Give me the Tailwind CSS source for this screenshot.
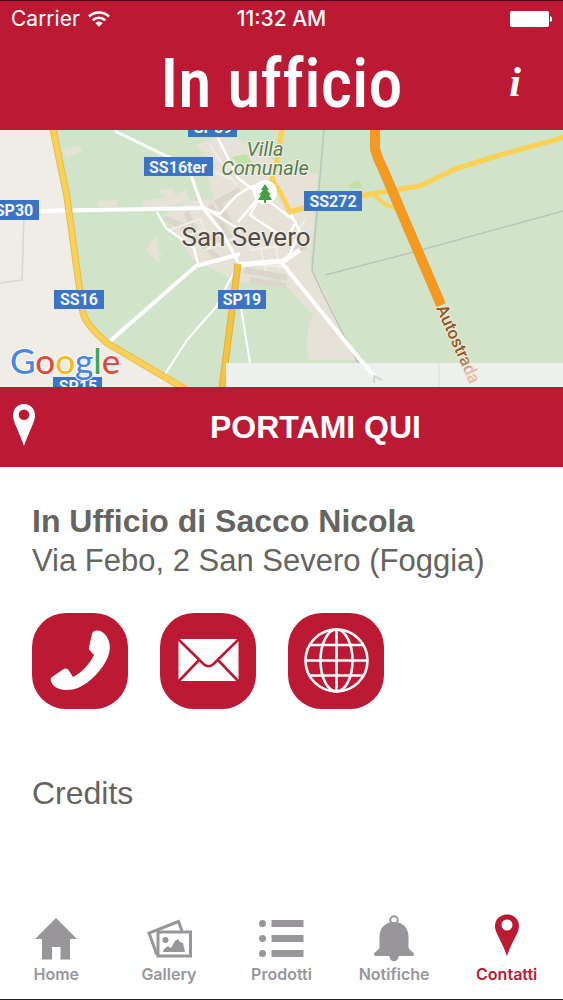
<!DOCTYPE html>
<html lang="it">
<head>
  <meta charset="UTF-8" />
  <meta name="viewport" content="width=device-width, initial-scale=1.0"/>
  <title>In Ufficio - Contatti</title>
  <script src="https://cdn.jsdelivr.net/npm/@tailwindcss/browser@4"></script>
</head>
<body class="min-h-screen flex flex-col bg-white border-b border-[#222] text-[#65645e] font-['Liberation_Sans',Arial,sans-serif]">

  <!-- Header -->
  <header class="bg-[#bb1934] border-t border-[#4a0610] text-white">
    <div class="grid grid-cols-3 items-center h-9 px-[11px] text-[21px] leading-6 font-['Inter',sans-serif]">
      <div class="flex items-center gap-2">
        <span>Carrier</span>
        <svg class="w-[22px] h-4" viewBox="0 0 22 16" fill="none" stroke="#fff" stroke-width="2.6">
          <path d="M1 5.6C6.5 .2 15.500 .2 21 5.600"/>
          <path d="M4.700 9.300C8.300 5.900 13.700 5.900 17.300 9.300"/>
          <path d="M11 15.800 7.300 12C9.400 10 12.600 10 14.700 12Z" fill="#fff" stroke="none"/>
        </svg>
      </div>
      <span class="text-center font-medium whitespace-nowrap">11:32 AM</span>
      <svg class="justify-self-end w-[43px] h-[18px]" viewBox="0 0 43 18" fill="#fff">
        <rect x="1" y="1" width="39" height="16" rx="2"/>
        <path d="M41 6v6c3-1 3-5 0-6z"/>
      </svg>
    </div>
    <div class="grid grid-cols-[64px_1fr_64px] items-center h-[93px] px-4">
      <h1 class="col-start-2 text-center text-[68px] leading-[88px] font-medium whitespace-nowrap font-['Roboto_Condensed','Liberation_Sans',sans-serif] [font-variant-ligatures:none]">In ufficio</h1>
      <button type="button" aria-label="Informazioni" class="pb-1 text-[42px] leading-none font-bold italic font-['Liberation_Serif',serif]">i</button>
    </div>
  </header>

  <!-- Map -->
  <svg class="block w-full h-auto" viewBox="0 130 563 257" role="img" aria-label="Mappa di San Severo">
    <defs>
      <linearGradient id="fade" x1="0" x2="1">
        <stop offset="0.65" stop-color="#8a5a2b"/>
        <stop offset="0.85" stop-color="#dcbcae"/>
      </linearGradient>
    </defs>
    <rect y="130" width="563" height="257" fill="#d1e4c9"/>
    <path d="M0 130H53L67 197L80 292L83 315L107 343L183 388H0Z" fill="#f0ece6"/>
    <!-- built-up area -->
    <g fill="#e6e2d8">
      <path d="M196 145l22-8 22 2 18 14 30 14 30 8-4 50-4 38 14 27 33 70h-48q-6-24 4-45l-34-37-35 5-25-11-26-12-30-45 28-14 23-2-7-25 9-8z"/>
      <path d="M62 150l18-4 2 6-16 5zM98 201l19-1v7H98zM143 201l20-3 8 3v6h-28zM158 190l14-2 4 8 10-7 4 13-18 3zM146 250l5-8 5-6 3 16 5 2-6 2 2 8z"/>
    </g>
    <path d="M232 157l14-3 6 8-14 3zM348 185l10-5 6 7-12 2z" fill="#c5dfa8"/>
    <g fill="none" stroke="#dad6cc" stroke-width="6">
      <path d="M164 218l32 14 30 10M186 212l14 30 20 18M210 205l24 40M245 270l42 8M250 280l36 6M290 250l16-4M240 190l-22 12 12 22"/>
    </g>
    <g fill="none" stroke="#f1eee7" stroke-width="2">
      <path d="M170 230l30-11 12 30M180 240l22-10M205 250l30-12M250 250l35-5M295 235l10-15M240 262l50 6M200 165l30 14M210 145l26 40M260 245l6 26M275 240l4 30"/>
    </g>
    <!-- boundaries -->
    <g fill="none" stroke="#b9c5b9" stroke-width="1.500">
      <path d="M324 130L312 270L322 292L358 363M325 275L410 253L563 211"/>
      <path d="M24 215L22 280L0 283" stroke="#d9d7cf"/>
    </g>
    <!-- minor roads -->
    <g fill="none" stroke="#fff" stroke-linejoin="round">
      <path d="M38 211L205 208" stroke-width="4"/>
      <path d="M110 341L196 266L240 254" stroke-width="4"/>
      <path d="M115 131L160 153L187 165L203 208L222 232L238 262" stroke-width="3"/>
      <path d="M157 212L166 228L194 248L198 264M203 208L220 214L236 196L250 187L262 184M205 208L240 230M238 222L260 196L250 215L280 235M262 196L296 222L286 240M290 212L300 232L286 262M218 138L238 178L256 192" stroke-width="2.500"/>
      <path d="M238 265L270 262L283 261L300 250" stroke-width="5"/>
      <path d="M281 262L375 378" stroke-width="4"/>
      <path d="M236 268L216 307L187 340L160 382M241 308L250 363" stroke-width="2"/>
    </g>
    <!-- main roads -->
    <g fill="none" stroke-linejoin="round">
      <g stroke="#e2bd55" stroke-width="7">
        <path d="M53 129L67 197L80 292L83 313Q86 325 107 343L185 389"/>
        <path d="M238 264L222 388" stroke="#dfb23e"/>
      </g>
      <g stroke="#fad055" stroke-width="5">
        <path d="M53 129L67 197L80 292L83 313Q86 325 107 343L185 389"/>
        <path d="M238 264L222 388" stroke="#f3c343"/>
        <path d="M282 129L277 160L272 180L280 192L290 212L310 206L365 195L420 186L455 169L500 155L565 137"/>
        <path d="M374 195L386 205L400 209" stroke-width="4"/>
      </g>
      <path d="M375 129V149Q378 160 383 169L441 305" stroke="#df9a38" stroke-width="10"/>
      <path d="M375 129V149Q378 160 383 169L441 305" stroke="#f7991c" stroke-width="8"/>
    </g>
    <rect x="226" y="363" width="337" height="24" fill="#f1f3f4" fill-opacity=".85"/>
    <path d="M439 363v24" stroke="#d5dfcd"/>
    <path d="M361 360L374 376" fill="none" stroke="#fff" stroke-width="4"/>
    <path d="M374 383v-7l8 4" fill="none" stroke="#d4d4d2" stroke-width="2"/>
    <text transform="translate(436 308) rotate(66)" font-family="Roboto" font-size="17" font-weight="500" fill="url(#fade)" stroke="#f6ecd9" stroke-width="2" paint-order="stroke">Autostrada</text>
    <!-- park marker -->
    <circle cx="265" cy="192" r="12" fill="#fff"/>
    <path d="M265 184l4 6h-2l4 5h-2l3 5h-6v3h-2v-3h-6l3-5h-2l4-5h-2z" fill="#46a043"/>
    <g font-family="Roboto" font-style="italic" font-size="20" fill="#587a50" stroke="#eef3e8" stroke-width="2" paint-order="stroke" text-anchor="middle">
      <text x="265" y="156">Villa</text>
      <text x="265" y="175">Comunale</text>
    </g>
    <text x="246" y="246" font-family="Roboto" font-size="26" fill="#504b48" stroke="#f4f1ea" stroke-width="2" paint-order="stroke" text-anchor="middle">San Severo</text>
    <!-- road signs -->
    <g fill="#3b74c5">
      <rect x="144" y="157" width="69" height="19"/>
      <rect x="-8" y="200" width="47" height="20"/>
      <rect x="54" y="290" width="50" height="19"/>
      <rect x="218" y="290" width="48" height="19"/>
      <rect x="304" y="191" width="58" height="20"/>
      <rect x="53" y="377" width="49" height="19"/>
      <rect x="188" y="117" width="49" height="20"/>
    </g>
    <g font-family="Roboto" font-size="16" font-weight="700" fill="#f0f6ff" text-anchor="middle">
      <text x="178" y="173">SS16ter</text>
      <text x="14" y="216">SP30</text>
      <text x="79" y="305">SS16</text>
      <text x="242" y="305">SP19</text>
      <text x="333" y="207">SS272</text>
      <text x="78" y="392">SP15</text>
      <text x="213" y="133">SP89</text>
    </g>
    <text x="10" y="374" font-family="Lato" font-size="35" font-weight="500" stroke="#fff" stroke-width="2" paint-order="stroke"><tspan fill="#4a86e4">G</tspan><tspan fill="#e0493c">o</tspan><tspan fill="#f5ba1b">o</tspan><tspan fill="#4a86e4">g</tspan><tspan fill="#3aa757">l</tspan><tspan fill="#e0493c">e</tspan></text>
  </svg>

  <!-- Directions -->
  <button type="button" class="grid grid-cols-[68px_1fr] items-center w-full h-20 bg-[#bb1934] text-white text-[32px] leading-10 font-bold">
    <svg class="ml-3 w-6 h-[46px]" viewBox="0 0 24 46" fill="#fff" fill-rule="evenodd">
      <path d="M12 0C5.500 0 1 5 1 11.500C1 18 6 25 12 42C18 25 23 18 23 11.500C23 5 18.500 0 12 0ZM12 5.500a5.300 5.300 0 1 1 0 10.600a5.300 5.300 0 1 1 0-10.600Z"/>
    </svg>
    <span>PORTAMI QUI</span>
  </button>

  <!-- Contact details -->
  <main class="flex-1 px-8 pt-[34px]">
    <h2 class="text-[32px] leading-10 font-bold">In Ufficio di Sacco Nicola</h2>
    <p class="text-[31px] leading-10">Via Febo, 2 San Severo (Foggia)</p>
    <div class="flex gap-8 mt-8">
      <a href="tel:" aria-label="Telefono" class="size-24 rounded-[34px] bg-[#bb1934]">
        <svg class="size-24" viewBox="0 0 96 96" fill="#fff">
          <path d="M62.500 18C67 16.500 71 19 73.500 22C79 29 79 38 75 46C69 58 59 69 46 75C38 78 27 77.500 22 73C19 70 17.500 66 20 64L31 56.500C33 55 35 55 36.500 57L41 64C49 60 58 51 62 42L57 36.500C56.500 35.500 57 34 57.500 32L60 21C60.500 19.500 61 18.500 62.500 18Z"/>
        </svg>
      </a>
      <a href="mailto:" aria-label="Email" class="size-24 rounded-[34px] bg-[#bb1934]">
        <svg class="size-24" viewBox="0 0 96 96">
          <rect x="18.500" y="26" width="60" height="42" fill="#fff"/>
          <path d="M18 26L44 51.500Q48.500 55 53 51.500L79 26M18 69L39 47M79 69L58 47" fill="none" stroke="#bb1934" stroke-width="2.600"/>
        </svg>
      </a>
      <a href="#" aria-label="Sito web" class="size-24 rounded-[34px] bg-[#bb1934]">
        <svg class="size-24" viewBox="0 0 96 96" fill="none" stroke="#fff" stroke-width="2.600">
          <circle cx="48.500" cy="47.500" r="31"/>
          <ellipse cx="48.500" cy="47.500" rx="16" ry="31"/>
          <path d="M48.500 16.500v62M17.500 47.500h62M22 32h53M22 62.500h53"/>
        </svg>
      </a>
    </div>
    <a href="#" class="inline-block mt-16 text-[32px] leading-10">Credits</a>
  </main>

  <!-- Tab bar -->
  <nav class="grid grid-cols-5 pb-[15px] text-center text-[16px] leading-5 font-semibold text-[#98969a] font-['Inter',sans-serif]">
    <a href="#" class="flex flex-col items-center gap-0.5">
      <svg class="size-12" viewBox="0 0 48 48" fill="currentColor">
        <path d="M24 4L3 25H10V45.500H20V33H28.500V45.500H38V25H45Z"/>
      </svg>
      Home
    </a>
    <a href="#" class="flex flex-col items-center gap-0.5">
      <svg class="size-12" viewBox="0 0 48 48" fill="none" stroke="currentColor" stroke-width="3">
        <path d="M12 41L4 19L33.500 7.500L37 17"/>
        <rect x="13" y="18" width="32.500" height="24"/>
        <circle cx="20.500" cy="26" r="3" fill="currentColor" stroke="none"/>
        <path d="M18 38l1-3 4-3 3 2 4-7 3-2 2 3 3 1 2 9z" fill="currentColor" stroke="none"/>
      </svg>
      Gallery
    </a>
    <a href="#" class="flex flex-col items-center gap-0.5">
      <svg class="size-12" viewBox="0 0 48 48" fill="currentColor">
        <circle cx="5.500" cy="9.500" r="3.500"/>
        <circle cx="5.500" cy="24.500" r="3.500"/>
        <circle cx="5.500" cy="39.500" r="3.500"/>
        <path d="M14.500 6H46.500V13H14.500zM14.500 21H46.500V28H14.500zM14.500 36H46.500V43H14.500z"/>
      </svg>
      Prodotti
    </a>
    <a href="#" class="flex flex-col items-center gap-0.5">
      <svg class="size-12" viewBox="0 0 48 48" fill="currentColor">
        <circle cx="24" cy="6" r="3.700" fill="none" stroke="currentColor" stroke-width="2"/>
        <path d="M24 8C14 8 9.500 15 9.500 23V33C9.500 36 4 38 4 40C4 42 5 42 7 42H19.500C19.500 49 28.500 49 28.500 42H41C43 42 44 42 44 40C44 38 38.500 36 38.500 33V23C38.500 15 34 8 24 8Z"/>
      </svg>
      Notifiche
    </a>
    <a href="#" aria-current="page" class="flex flex-col items-center gap-0.5 text-[#bb1934]">
      <svg class="size-12" viewBox="0 0 48 48" fill="currentColor" fill-rule="evenodd">
        <path d="M24 .5C17 .5 12 5.500 12 12C12 19 18 25 24 42C30 25 36 19 36 12C36 5.500 31 .5 24 .5ZM24 5.500a5.500 5.500 0 1 1 0 11a5.500 5.500 0 1 1 0-11Z"/>
      </svg>
      Contatti
    </a>
  </nav>

</body>
</html>
